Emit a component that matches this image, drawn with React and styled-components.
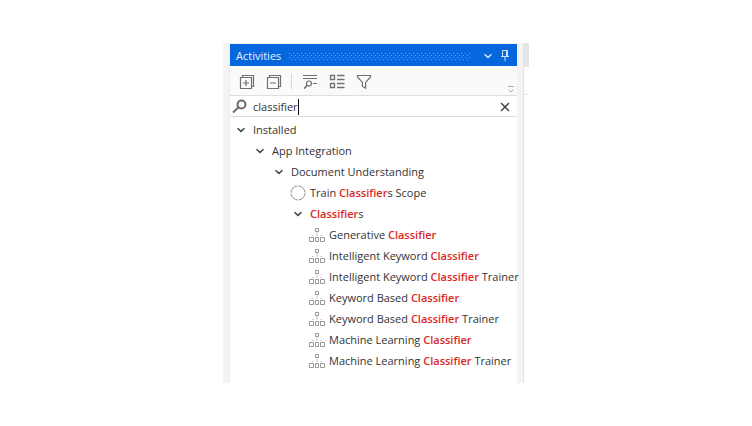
import { useState } from "react";
import styled, { createGlobalStyle } from "styled-components";

const GlobalStyle = createGlobalStyle`
  * {
    box-sizing: border-box;
  }

  body {
    margin: 0;
    background: #fff;
    color: #333;
    font-family: "Open Sans", "Noto Sans", sans-serif;
    font-size: 11px;
    line-height: 16px;
  }

  button {
    border: none;
    padding: 0;
    background: none;
    color: inherit;
    font: inherit;
    cursor: pointer;
  }

  svg {
    display: block;
    flex: none;
  }
`;

const activities = [
  {
    title: "Installed",
    children: [
      {
        title: "App Integration",
        children: [
          {
            title: "Document Understanding",
            children: [
              { title: "Train Classifiers Scope", icon: "scope" },
              {
                title: "Classifiers",
                children: [
                  { title: "Generative Classifier" },
                  { title: "Intelligent Keyword Classifier" },
                  { title: "Intelligent Keyword Classifier Trainer" },
                  { title: "Keyword Based Classifier" },
                  { title: "Keyword Based Classifier Trainer" },
                  { title: "Machine Learning Classifier" },
                  { title: "Machine Learning Classifier Trainer" },
                ],
              },
            ],
          },
        ],
      },
    ],
  },
];

const Icon = ({ children, stroke = "currentColor", weight = 1 }) => (
  <svg width="16" height="16" viewBox="0 0 16 16" fill="none" stroke={stroke} strokeWidth={weight} aria-hidden="true">
    {children}
  </svg>
);

const ExpandIcon = () => (
  <Icon weight={1.2}>
    <path d="M1.5 3.5h11v11h-11zM3.5 3V1.5h11v11H13M7 6v6M4 9h6" />
  </Icon>
);

const CollapseIcon = () => (
  <Icon weight={1.2}>
    <path d="M1.5 3.5h11v11h-11zM3.5 3V1.5h11v11H13M4 9h6" />
  </Icon>
);

const FindIcon = () => (
  <Icon weight={1.2}>
    <path d="M1 1.5h14M1 4.5h14M11 9.5h4" />
    <circle cx="7" cy="9.5" r="2.5" fill="#fafafa" />
    <path d="M5.2 11.4 2 14.6" strokeWidth="1.5" />
  </Icon>
);

const ListIcon = () => (
  <Icon weight={1.3}>
    <path d="M1.5 1.5h4v4h-4zM1.5 9.5h4v4h-4zM8 1.5h7.5M8 5.5h7.5M8 9.5h7.5M8 13.5h7.5" />
  </Icon>
);

const FilterIcon = () => (
  <Icon weight={1.2}>
    <path d="M1.5 1.5h13v1.4L9.6 8.4v5.8l-3.2-2V8.4L1.5 2.9z" />
  </Icon>
);

const SearchIcon = () => (
  <Icon stroke="#6b6b6b" weight={2}>
    <circle cx="9.5" cy="5.5" r="4" />
    <path d="M6.6 8.3 1 13.5" />
  </Icon>
);

const ChevronIcon = ({ stroke = "#444", open = true }) => (
  <Icon stroke={stroke} weight={1.5}>
    <path d={open ? "M4.5 6.2 8 9.4l3.5-3.2" : "M6.2 4.5 9.4 8l-3.2 3.5"} />
  </Icon>
);

const PinIcon = () => (
  <Icon stroke="#cfe2fa">
    <path d="M5.5 2.5h5v6h-5zM9.5 3v5M4 8.5h8M8 9v4" />
  </Icon>
);

const CloseIcon = () => (
  <Icon stroke="#444" weight={1.5}>
    <path d="m4 4 8 8M12 4l-8 8" />
  </Icon>
);

const ScopeIcon = () => (
  <Icon stroke="#8f8f8f">
    <circle cx="8" cy="8" r="7" strokeDasharray="10 1" />
  </Icon>
);

const ActivityIcon = () => (
  <Icon stroke="#989898">
    <path d="M6.5 1.5h3v3h-3zM.5 10.5h4v4h-4zM6.5 10.5h3v4h-3zM11.5 10.5h4v4h-4z" />
    <path d="M8 5v4M3 8.5h1.5M11.5 8.5H13" stroke="#c4c4c4" />
  </Icon>
);

const Highlight = ({ text, query }) => {
  const at = query ? text.toLowerCase().indexOf(query.toLowerCase()) : -1;
  if (at < 0) return <span>{text}</span>;

  return (
    <span>
      {text.slice(0, at)}
      <Match>{text.slice(at, at + query.length)}</Match>
      {text.slice(at + query.length)}
    </span>
  );
};

const TreeNode = ({ node, query }) => {
  const [open, setOpen] = useState(true);

  if (!node.children) {
    return (
      <li>
        <Row>
          {node.icon === "scope" ? <ScopeIcon /> : <ActivityIcon />}
          <Highlight text={node.title} query={query} />
        </Row>
      </li>
    );
  }

  return (
    <li>
      <Row as="button" type="button" aria-expanded={open} onClick={() => setOpen(!open)}>
        <ChevronIcon open={open} />
        <Highlight text={node.title} query={query} />
      </Row>
      {open && (
        <Branch>
          {node.children.map((child) => (
            <TreeNode key={child.title} node={child} query={query} />
          ))}
        </Branch>
      )}
    </li>
  );
};

export default function App() {
  const [query, setQuery] = useState("classifier");

  return (
    <Page>
      <GlobalStyle />
      <Dock>
        <Panel>
          <TitleBar>
            <Title>Activities</Title>
            <Grip />
            <TitleButton type="button" aria-label="Window position">
              <ChevronIcon stroke="#cfe2fa" />
            </TitleButton>
            <TitleButton type="button" aria-label="Auto hide">
              <PinIcon />
            </TitleButton>
          </TitleBar>

          <Toolbar>
            <ToolButton type="button" aria-label="Expand all"><ExpandIcon /></ToolButton>
            <ToolButton type="button" aria-label="Collapse all"><CollapseIcon /></ToolButton>
            <Divider />
            <ToolButton type="button" aria-label="Search in descriptions"><FindIcon /></ToolButton>
            <ToolButton type="button" aria-label="Group"><ListIcon /></ToolButton>
            <ToolButton type="button" aria-label="Filter"><FilterIcon /></ToolButton>
            <Overflow type="button" aria-label="Toolbar options">
              <svg width="6" height="7" viewBox="0 0 6 7" fill="none" stroke="#aaa">
                <path d="M0 .5h6M.5 3.5 3 6l2.5-2.5" />
              </svg>
            </Overflow>
          </Toolbar>

          <SearchBar>
            <SearchIcon />
            <SearchInput
              aria-label="Search activities"
              value={query}
              onChange={(e) => setQuery(e.target.value)}
            />
            <ClearButton type="button" aria-label="Clear search" onClick={() => setQuery("")}>
              <CloseIcon />
            </ClearButton>
          </SearchBar>

          <Tree>
            {activities.map((node) => (
              <TreeNode key={node.title} node={node} query={query} />
            ))}
          </Tree>
        </Panel>
        <DocumentEdge>
          <DocumentTab />
          <DocumentHeader />
        </DocumentEdge>
      </Dock>
    </Page>
  );
}

const Page = styled.main`
  display: flex;
  align-items: center;
  justify-content: center;
  min-height: 100vh;
`;

const Dock = styled.div`
  display: flex;
  width: 100%;
  max-width: 306px;
  padding-left: 6px;
  background: #f4f4f4;
`;

const Panel = styled.section`
  flex: 1;
  min-width: 0;
  margin-top: 1px;
  border-left: 1px solid #ebebeb;
  background: #fff;
`;

const TitleBar = styled.header`
  display: flex;
  align-items: center;
  height: 22px;
  padding: 2px 4px 0 6px;
  background: #0467dd;
  color: #eaf3ff;
`;

const Title = styled.h1`
  margin: 0;
  font-size: 11px;
  font-weight: 400;
`;

const Grip = styled.div`
  flex: 1;
  height: 7px;
  margin: 0 10px 0 8px;
  background-image: conic-gradient(at 1px 1px, transparent 75%, #5ea2f0 0),
    conic-gradient(at 1px 1px, transparent 75%, #5ea2f0 0);
  background-position: 0 0, 2px 2px;
  background-size: 4px 4px;
`;

const TitleButton = styled.button`
  & + & {
    margin-left: 1px;
  }
`;

const Toolbar = styled.div`
  display: flex;
  align-items: center;
  height: 30px;
  padding: 2px 3px 0 3px;
  border-bottom: 1px solid #dedede;
  background: #fafafa;
  color: #707070;
`;

const ToolButton = styled.button`
  display: flex;
  align-items: center;
  justify-content: center;
  width: 27px;
  height: 24px;
`;

const Divider = styled.span`
  width: 1px;
  height: 15px;
  margin: 0 4px;
  background: #d8d8d8;
`;

const Overflow = styled.button`
  align-self: flex-end;
  margin-left: auto;
  padding-bottom: 2px;
`;

const SearchBar = styled.div`
  display: flex;
  align-items: center;
  height: 21px;
  padding: 1px 4px 0 2px;
  border-bottom: 1px solid #dcdcdc;
`;

const SearchInput = styled.input`
  field-sizing: content;
  min-width: 1px;
  max-width: 240px;
  height: 16px;
  margin-left: 5px;
  padding: 0;
  border: none;
  border-right: 1px solid #111;
  outline: none;
  background: none;
  color: inherit;
  font: inherit;
  caret-color: transparent;
`;

const ClearButton = styled.button`
  margin-left: auto;
`;

const Tree = styled.ul`
  margin: 0;
  padding: 2px 0 12px 3px;
  list-style: none;
`;

const Branch = styled.ul`
  margin: 0;
  padding: 0 0 0 19px;
  list-style: none;
`;

const Row = styled.div`
  display: flex;
  align-items: center;
  gap: 4px;
  width: 100%;
  height: 21px;
  white-space: nowrap;
`;

const Match = styled.strong`
  color: #d9281f;
  font-weight: 600;
`;

const DocumentEdge = styled.div`
  width: 6px;
  margin-left: 6px;
  border-left: 1px solid #e4e4e4;
  background: #fff;
`;

const DocumentTab = styled.div`
  height: 24px;
  background: #e4e4e4;
`;

const DocumentHeader = styled.div`
  height: 28px;
  border-bottom: 1px solid #e4e4e4;
`;
